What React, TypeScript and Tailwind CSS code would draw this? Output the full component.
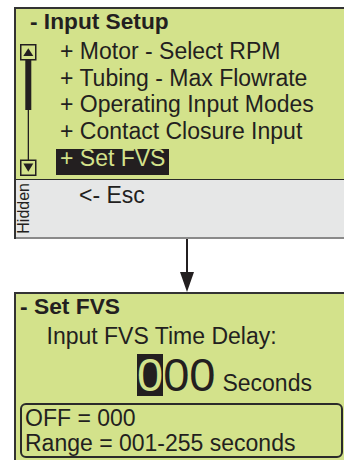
const GREEN = "#d3e28b";

function ScrollBar() {
  return (
    <svg width="17" height="133" viewBox="0 0 17 133" className="shrink-0">
      <rect x="0.75" y="0.75" width="15" height="15" fill={GREEN} stroke="#231f20" strokeWidth="1.5" />
      <polygon points="8.3,4.3 13.3,12 3.3,12" fill="#231f20" />
      <rect x="5.3" y="16" width="6" height="50" fill="#231f20" />
      <rect x="7.7" y="66" width="1.3" height="50" fill="#231f20" />
      <rect x="0.75" y="116.25" width="15" height="15" fill={GREEN} stroke="#231f20" strokeWidth="1.5" />
      <polygon points="3.3,119.5 13.3,119.5 8.3,127.7" fill="#231f20" />
    </svg>
  );
}

function DownArrow() {
  return (
    <svg width="16" height="53" viewBox="0 0 16 53">
      <rect x="7" y="0" width="2" height="36" fill="#231f20" />
      <polygon points="1,33 15,33 8,53" fill="#231f20" />
    </svg>
  );
}

export default function App() {
  const items = [
    "+ Motor - Select RPM",
    "+ Tubing - Max Flowrate",
    "+ Operating Input Modes",
    "+ Contact Closure Input",
  ];

  return (
    <div
      className="h-[460px] w-[344px] overflow-hidden bg-white pt-[7px] text-[#231f20]"
      style={{ fontFamily: '"Liberation Sans", Arial, sans-serif' }}
    >
      {/* Menu screen */}
      <div className="ml-[14px] border-l-2 border-t-2 border-[#333]">
        <div className="h-[171px] border-b border-[#2a2a2a] bg-[#d3e28b]">
          <div className="pl-[14px] text-[22.7px] font-bold leading-[24px]">- Input Setup</div>
          <div className="mt-[5px] flex">
            <div className="ml-[4px] mt-[6px]">
              <ScrollBar />
            </div>
            <div className="ml-[19px] text-[23px] leading-[26.7px]">
              {items.map((t) => (
                <div key={t} className="whitespace-nowrap pl-[4px]">
                  {t}
                </div>
              ))}
              <div className="whitespace-nowrap">
                <span className="inline-block bg-[#231f20] px-[4px] pb-[8px] leading-[18px] text-[#d3e28b]">
                  + Set FVS
                </span>
              </div>
            </div>
          </div>
        </div>
        <div className="flex h-[59px] border-b-2 border-[#8a8a8a] bg-[#e6e7e7]">
          <div className="flex h-full w-[15px] items-center justify-center">
            <span className="rotate-180 text-[16px] leading-[15px] [writing-mode:vertical-rl]">Hidden</span>
          </div>
          <div className="ml-[48px] mt-[2px] text-[23px] leading-[26px]">&lt;- Esc</div>
        </div>
      </div>

      {/* Arrow */}
      <div className="flex h-[53px] pl-[179px]">
        <DownArrow />
      </div>

      {/* Set FVS screen */}
      <div className="ml-[14px] h-[170px] border-l-2 border-t-2 border-[#333] bg-[#d3e28b]">
        <div className="pl-[4px] text-[22.8px] font-bold leading-[24px]">- Set FVS</div>
        <div className="mt-[5px] pl-[30.5px] text-[23px] leading-[26px]">Input FVS Time Delay:</div>
        <div className="mt-[5px] whitespace-nowrap pl-[121px] text-[47px] leading-[42px]">
          <span className="inline-block bg-[#231f20] text-[#d3e28b]">0</span>
          00
          <span className="ml-[7px] text-[23px] leading-[26px]">Seconds</span>
        </div>
        <div className="ml-[4px] mr-[1px] mt-[6.7px] rounded-[6px] border-2 border-[#2a2a2a] px-[3px] pt-[1.6px] text-[23px] leading-[25px]">
          <div>OFF = 000</div>
          <div>Range = 001-255 seconds</div>
        </div>
      </div>
    </div>
  );
}
